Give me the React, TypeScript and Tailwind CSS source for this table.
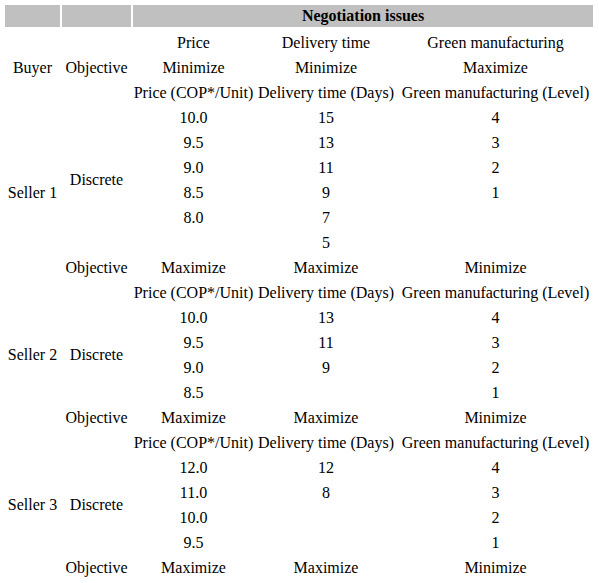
import React from 'react';

const Cell: React.FC<{ className?: string; children?: React.ReactNode }> = ({ className = '', children }) => (
  <div className={`flex items-center justify-center whitespace-nowrap pt-[2px] ${className}`}>{children}</div>
);

const IssueLabels = () => (
  <>
    <Cell>Price (COP*/Unit)</Cell>
    <Cell>Delivery time (Days)</Cell>
    <Cell>Green manufacturing (Level)</Cell>
  </>
);

const Values: React.FC<{ rows: string[][] }> = ({ rows }) => (
  <>
    {rows.map((r, i) => (
      <React.Fragment key={i}>
        <Cell>{r[0]}</Cell>
        <Cell>{r[1]}</Cell>
        <Cell>{r[2]}</Cell>
      </React.Fragment>
    ))}
  </>
);

const SellerObjective = () => (
  <>
    <Cell>Objective</Cell>
    <Cell>Maximize</Cell>
    <Cell>Maximize</Cell>
    <Cell>Minimize</Cell>
  </>
);

export default function App() {
  return (
    <div className="w-[599px] h-[583px] bg-white text-black overflow-hidden pt-[5px] pl-[5px] font-['Liberation_Serif',serif] text-[16px] leading-none">
      <div className="grid grid-cols-[55px_69px_121px_140px_195px] grid-rows-[24px] auto-rows-[25px] gap-x-[2px]">
        {/* header */}
        <div className="h-[22px] bg-[#c0c0c0]" />
        <div className="h-[22px] bg-[#c0c0c0]" />
        <div className="col-span-3 h-[22px] bg-[#c0c0c0] flex items-center justify-center font-bold">
          Negotiation issues
        </div>

        {/* buyer */}
        <Cell className="row-span-3">Buyer</Cell>
        <Cell className="row-span-3">Objective</Cell>
        <Cell>Price</Cell>
        <Cell>Delivery time</Cell>
        <Cell>Green manufacturing</Cell>
        <Cell>Minimize</Cell>
        <Cell>Minimize</Cell>
        <Cell>Maximize</Cell>
        <IssueLabels />

        {/* seller 1 */}
        <Cell className="row-span-7">Seller 1</Cell>
        <Cell className="row-span-6">Discrete</Cell>
        <Values
          rows={[
            ['10.0', '15', '4'],
            ['9.5', '13', '3'],
            ['9.0', '11', '2'],
            ['8.5', '9', '1'],
            ['8.0', '7', ''],
            ['', '5', ''],
          ]}
        />
        <SellerObjective />

        {/* seller 2 */}
        <Cell className="row-span-6">Seller 2</Cell>
        <div />
        <IssueLabels />
        <Cell className="row-span-4">Discrete</Cell>
        <Values
          rows={[
            ['10.0', '13', '4'],
            ['9.5', '11', '3'],
            ['9.0', '9', '2'],
            ['8.5', '', '1'],
          ]}
        />
        <SellerObjective />

        {/* seller 3 */}
        <Cell className="row-span-6">Seller 3</Cell>
        <div />
        <IssueLabels />
        <Cell className="row-span-4">Discrete</Cell>
        <Values
          rows={[
            ['12.0', '12', '4'],
            ['11.0', '8', '3'],
            ['10.0', '', '2'],
            ['9.5', '', '1'],
          ]}
        />
        <SellerObjective />
      </div>
    </div>
  );
}
